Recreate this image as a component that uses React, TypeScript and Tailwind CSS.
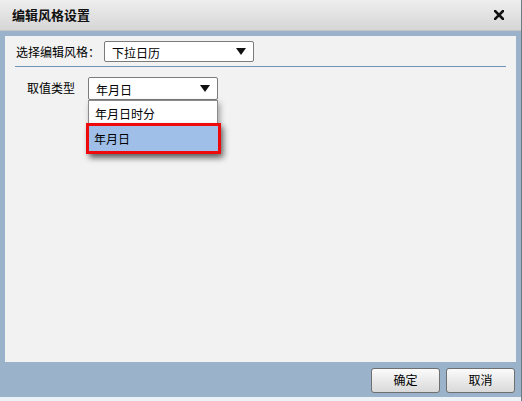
const FONT = { fontFamily: '"Microsoft YaHei", "Noto Sans CJK SC", "Noto Sans", sans-serif' }

function Arrow() {
  return (
    <svg width="10" height="7" viewBox="0 0 10 7" className="shrink-0">
      <polygon points="0,0 10,0 5,7" fill="#111" />
    </svg>
  )
}

function Select({ value, className }: { value: string; className: string }) {
  return (
    <div className={`flex items-center justify-between bg-white border border-[#7b7b7b] rounded-[2px] pl-[7px] pr-[7px] text-[12px] text-black ${className}`}>
      <span className="leading-none pt-[2px]">{value}</span>
      <Arrow />
    </div>
  )
}

function Button({ label }: { label: string }) {
  return (
    <button className="w-[69px] h-[25px] rounded-[3px] border border-[#6f6f6f] bg-gradient-to-b from-[#fbfbfb] to-[#d9d9d9] text-[12px] text-black leading-none">
      {label}
    </button>
  )
}

export default function App() {
  return (
    <div style={FONT} className="w-[522px] h-[401px] flex flex-col bg-[#9ab3ca] border-r border-[#6e7a86]">
      {/* title bar */}
      <div className="h-[31px] shrink-0 flex items-center justify-between pl-[12px] pr-[17px] bg-gradient-to-b from-[#eeeeee] to-[#d6d6d6] border-b border-[#c4c4c4]">
        <span className="text-[13px] font-bold text-[#111]">编辑风格设置</span>
        <svg width="10" height="10" viewBox="0 0 10 10">
          <path d="M1 1 L9 9 M9 1 L1 9" stroke="#111" strokeWidth="2.6" strokeLinecap="square" />
        </svg>
      </div>

      {/* body */}
      <div className="flex-1 flex flex-col px-[5px] pt-[5px]">
        <div className="flex-1 bg-[#f2f2f2] relative">
          <div className="flex items-center pt-[5px] pl-[11px]">
            <span className="w-[88px] shrink-0 whitespace-nowrap text-[12px] text-black">选择编辑风格：</span>
            <Select value="下拉日历" className="w-[150px] h-[21px]" />
          </div>
          <div className="mx-[10px] mt-[4px] h-px bg-[#6e93b8]" />

          <div className="flex items-start pt-[10px] pl-[22px]">
            <span className="w-[61px] text-[12px] text-black pt-[2px]">取值类型</span>
            <div className="relative">
              <Select value="年月日" className="w-[130px] h-[23px]" />
              {/* dropdown list */}
              <div className="absolute left-0 top-[23px] w-[130px] bg-white border border-[#8a8a8a] shadow-[2px_3px_6px_rgba(0,0,0,0.35)]">
                <div className="h-[22px] flex items-center pl-[6px] pt-[4px] text-[12px] text-black">年月日时分</div>
                <div className="h-[29px]" />
              </div>
              <div className="absolute left-[-2px] top-[46px] w-[135px] h-[31px] border-[3px] border-[#ee0a0a] bg-[#9fbfe9] flex items-center pl-[5px] text-[12px] text-black shadow-[3px_4px_6px_rgba(0,0,0,0.45)]">
                年月日
              </div>
            </div>
          </div>
        </div>
      </div>

      {/* footer */}
      <div className="h-[35px] shrink-0 flex items-center justify-end gap-[6px] pr-[6px] pt-[1px]">
        <Button label="确定" />
        <Button label="取消" />
      </div>
      <div className="h-[4px] shrink-0 bg-[#edf2f7]" />
    </div>
  )
}
